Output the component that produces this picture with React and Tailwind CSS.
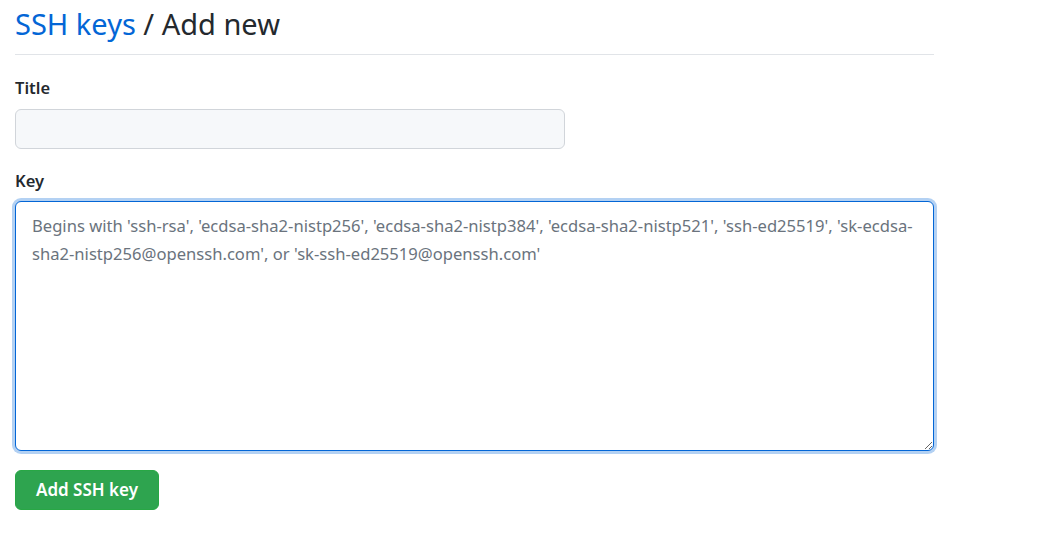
export default function App() {
  return (
    <div className="min-h-[534px] bg-white px-[15px] pt-[4px] font-['Noto_Sans',sans-serif] text-[#24292e]">
      <div className="w-[919px]">
        <div className="border-b border-[#e1e4e8] pb-[10px]">
          <h2 className="text-[29px] leading-[40px] font-normal">
            <a href="#" className="text-[#0366d6]">SSH keys</a> / Add new
          </h2>
        </div>

        <form className="pt-[22px]">
          <label className="block text-[16.5px] font-semibold leading-[22px]">Title</label>
          <input
            type="text"
            className="mt-[10px] block h-[40px] w-[550px] rounded-[6px] border border-[#d1d5da] bg-[#f6f8fa] px-3 text-base outline-none"
          />

          <label className="mt-[21px] block text-[16.5px] font-semibold leading-[22px]">Key</label>
          <textarea
            autoFocus
            placeholder="Begins with 'ssh-rsa', 'ecdsa-sha2-nistp256', 'ecdsa-sha2-nistp384', 'ecdsa-sha2-nistp521', 'ssh-ed25519', 'sk-ecdsa-sha2-nistp256@openssh.com', or 'sk-ssh-ed25519@openssh.com'"
            className="mt-[9px] block h-[250px] w-[919px] rounded-[6px] border border-[#0366d6] bg-white px-[16px] py-[10px] text-[16.6px] leading-[28px] shadow-[0_0_0_3px_rgba(3,102,214,0.3)] outline-none placeholder:text-[#6a737d]"
          />

          <button
            type="button"
            className="mt-[19px] h-[40px] w-[144px] rounded-[6px] border border-[#28a745] bg-[#2ea44f] text-[17px] font-semibold text-white"
          >
            Add SSH key
          </button>
        </form>
      </div>
    </div>
  );
}
